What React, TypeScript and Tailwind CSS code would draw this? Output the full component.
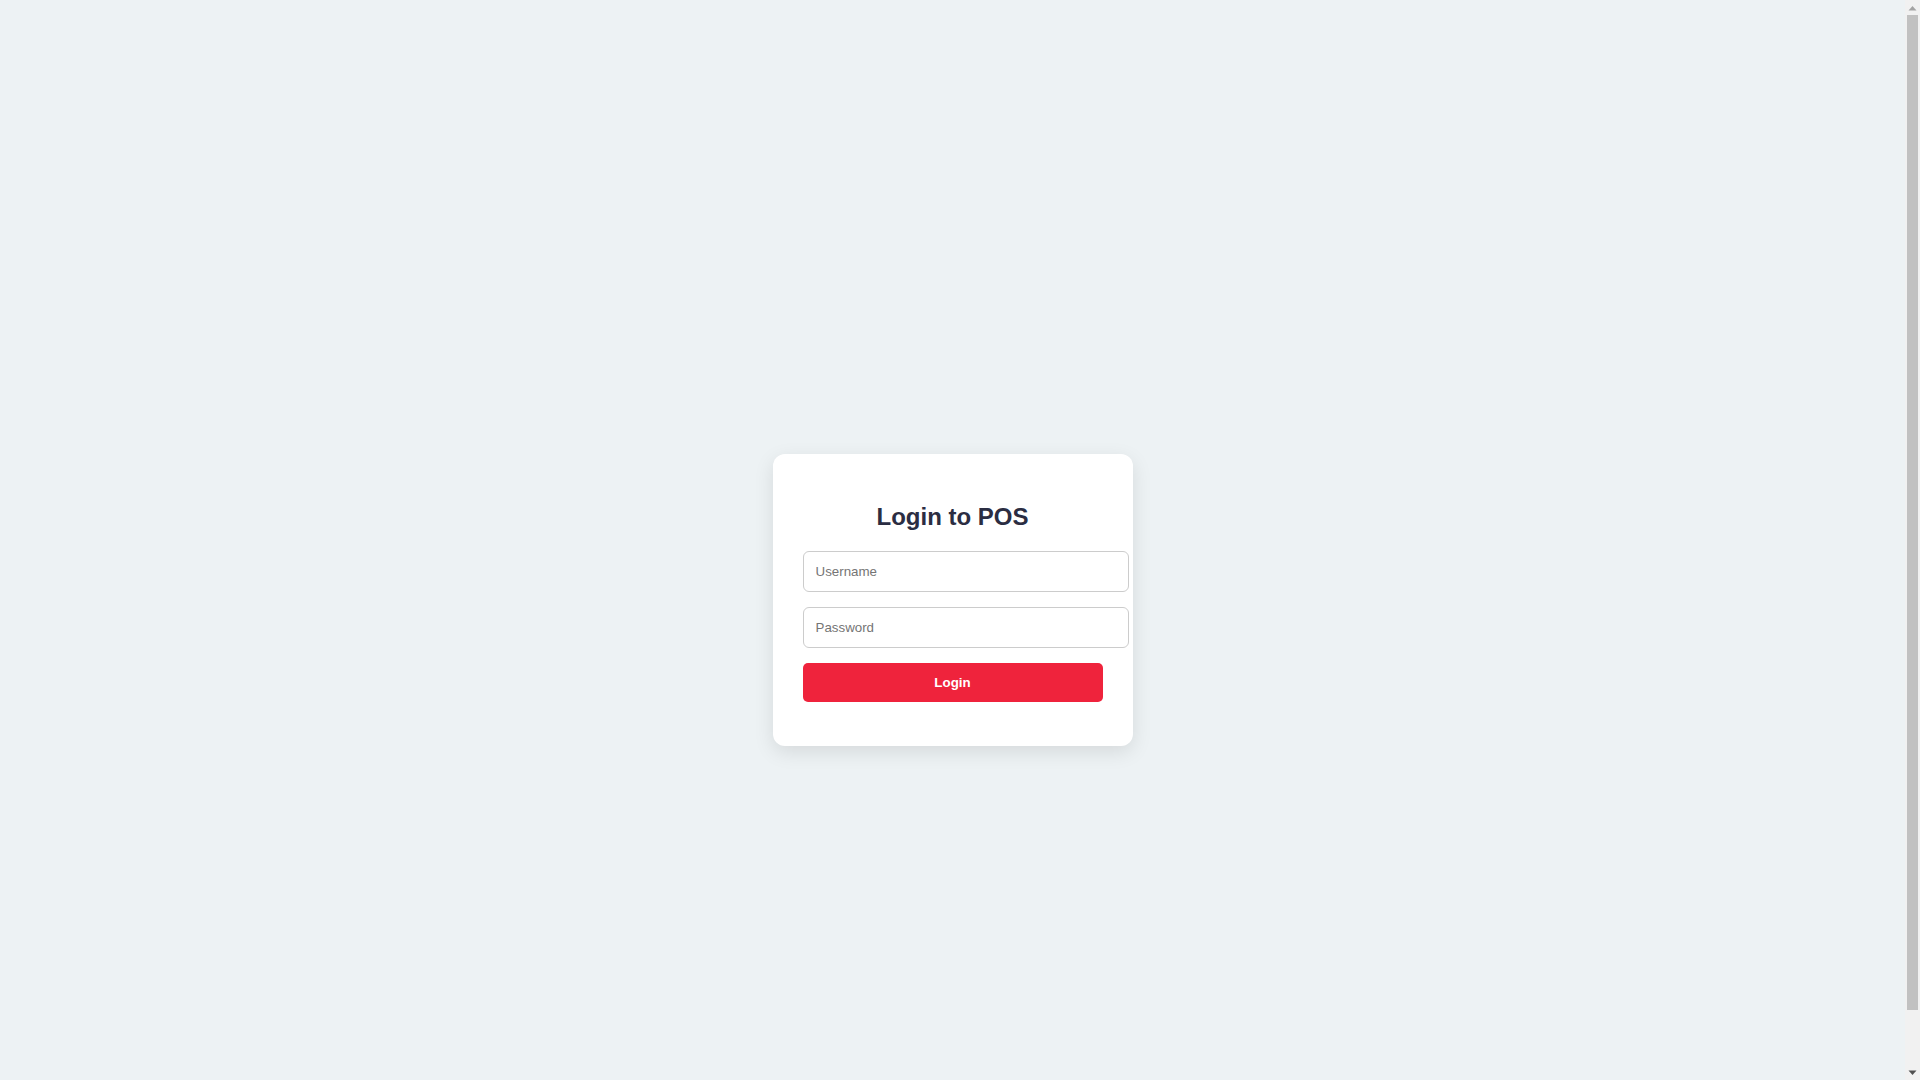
import React from "react";

function FakeScrollbar() {
  return (
    <div className="fixed top-0 right-0 w-[15px] h-screen bg-[#f1f1f1] flex flex-col items-center">
      <div className="h-[15px] w-full flex items-center justify-center">
        <svg width="9" height="6" viewBox="0 0 9 6">
          <polygon points="0.5,5.5 4.5,1 8.5,5.5" fill="#a3a3a3" />
        </svg>
      </div>
      <div className="w-[11px] h-[995px] bg-[#c1c1c1]" />
      <div className="flex-1" />
      <div className="h-[15px] w-full flex items-center justify-center">
        <svg width="9" height="6" viewBox="0 0 9 6">
          <polygon points="0.5,0.5 8.5,0.5 4.5,5" fill="#505050" />
        </svg>
      </div>
    </div>
  );
}

export default function App() {
  return (
    <div
      className="bg-[#edf2f4] pt-[60px] pr-[15px]"
      style={{ fontFamily: '"Liberation Sans", Arial, sans-serif' }}
    >
      <div className="h-screen flex items-center justify-center">
        <div className="w-[360px] bg-white rounded-[12px] px-[30px] pt-[30px] pb-[44px] shadow-[0_6px_20px_rgba(0,0,0,0.1)] box-border">
          <h2 className="text-[24px] leading-[27.6px] font-bold text-[#2b2d42] text-center mt-[19px] mb-[21px]">
            Login to POS
          </h2>
          <input
            type="text"
            placeholder="Username"
            className="box-content block w-[300px] px-[12px] py-[12px] h-[15px] text-[13.333px] leading-[15px] border border-[#cccccc] rounded-[6px] mb-[15px] outline-none placeholder:text-[#757575] text-[#2b2d42] bg-white"
          />
          <input
            type="password"
            placeholder="Password"
            className="box-content block w-[300px] px-[12px] py-[12px] h-[15px] text-[13.333px] leading-[15px] border border-[#cccccc] rounded-[6px] mb-[15px] outline-none placeholder:text-[#757575] text-[#2b2d42] bg-white"
          />
          <button className="block w-[300px] h-[39px] bg-[#ef233c] text-white text-[13.333px] font-bold rounded-[5px] cursor-pointer">
            Login
          </button>
        </div>
      </div>
      <FakeScrollbar />
    </div>
  );
}
